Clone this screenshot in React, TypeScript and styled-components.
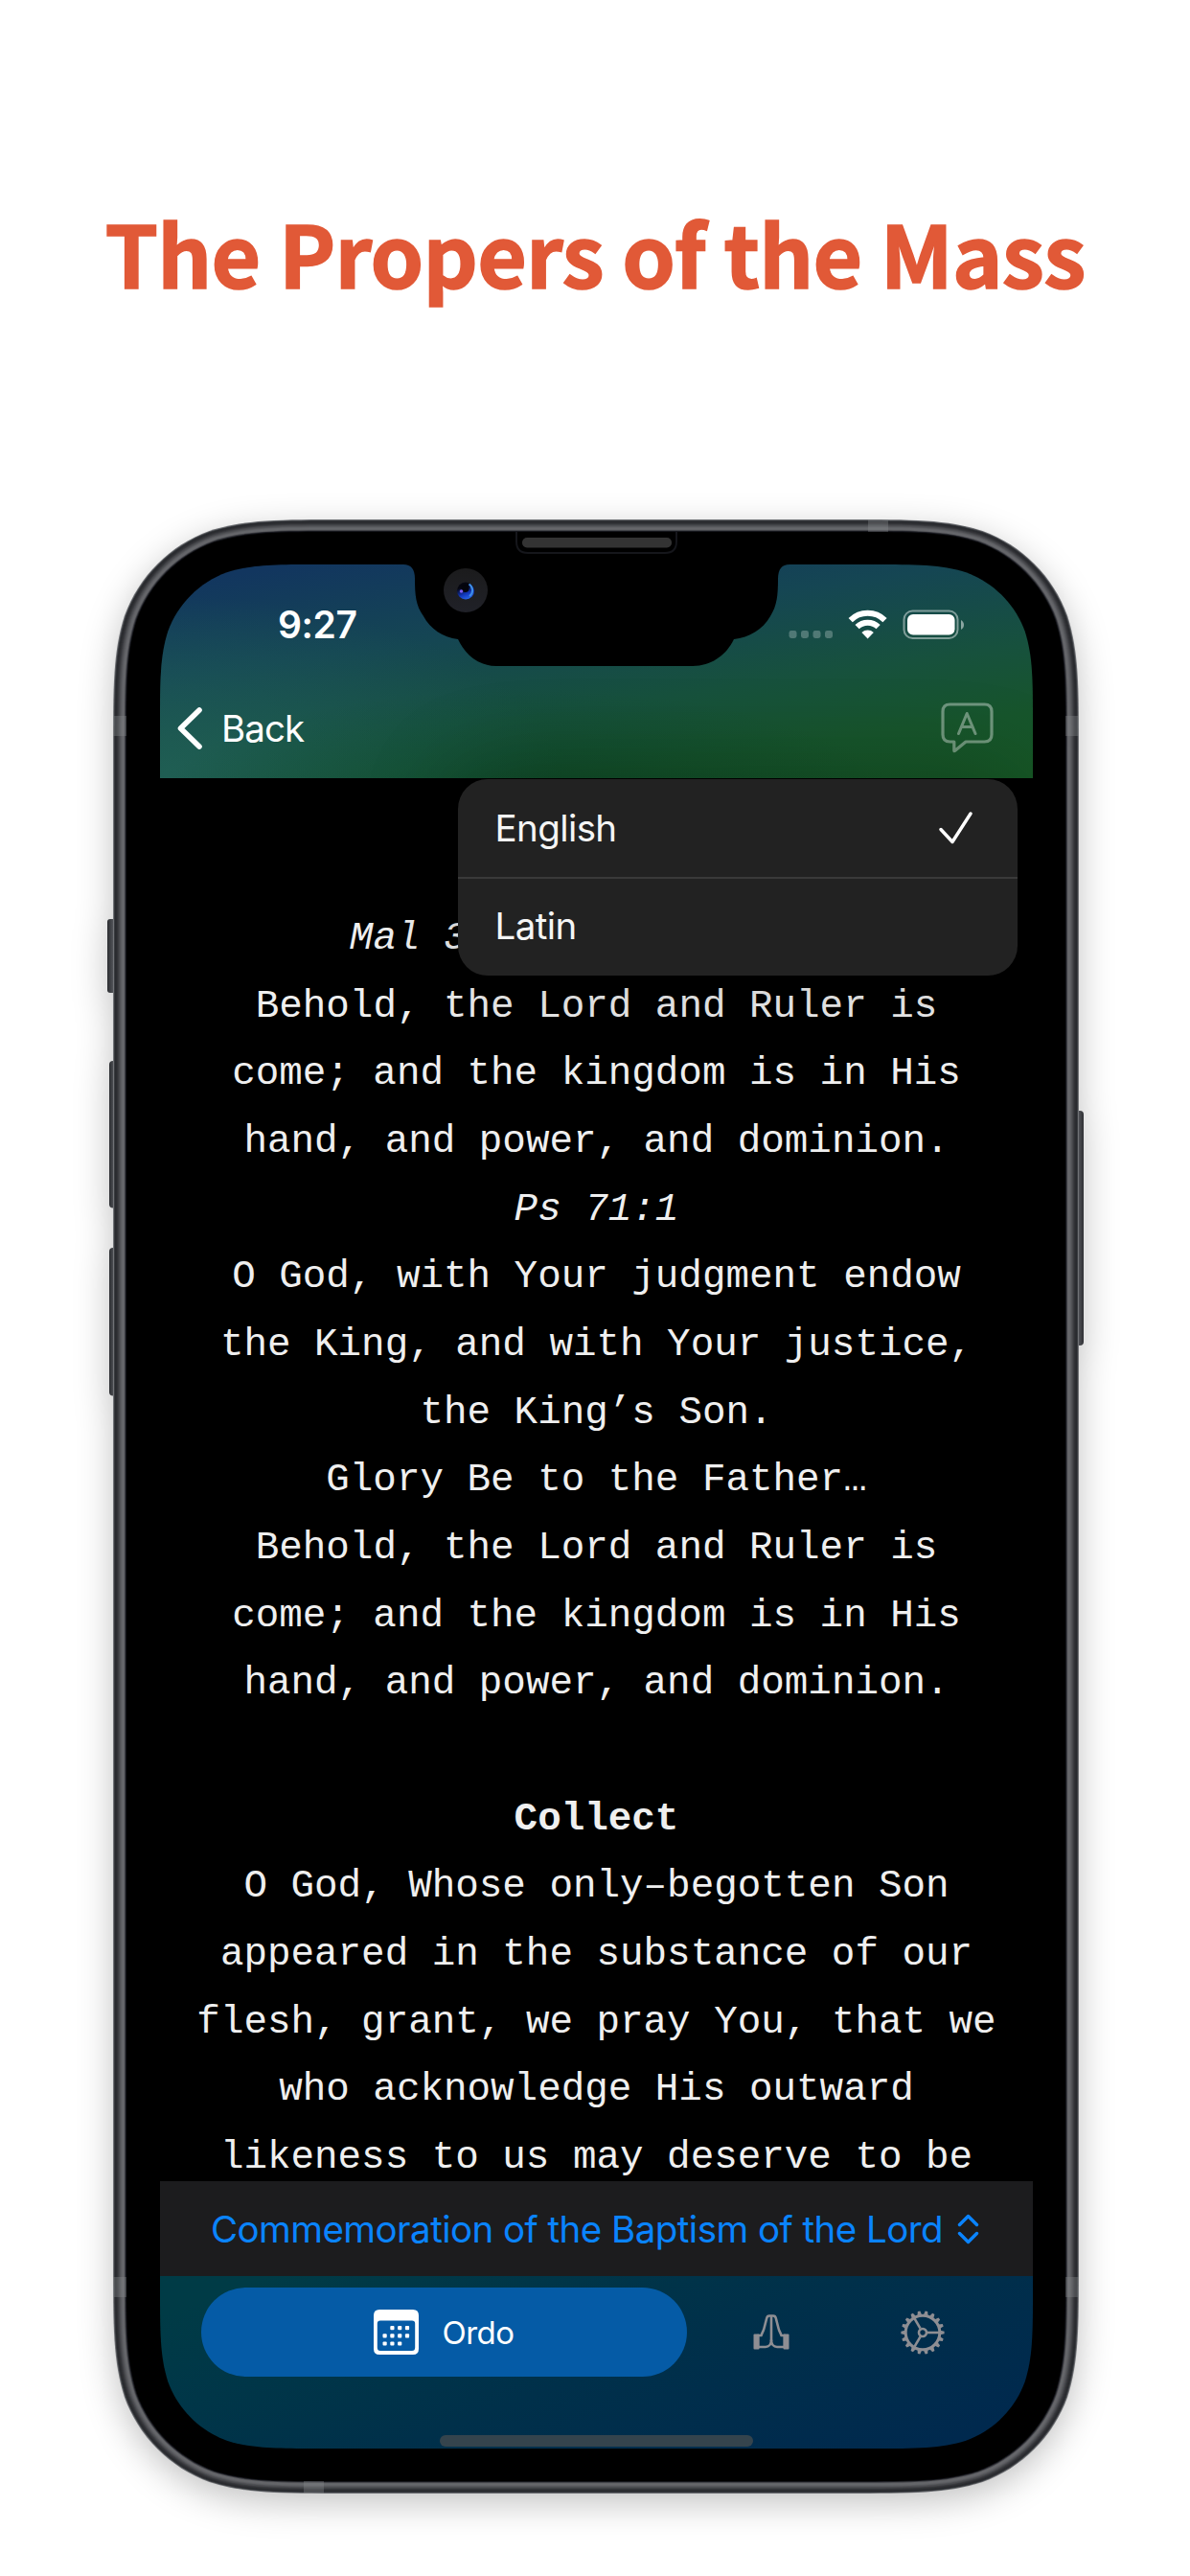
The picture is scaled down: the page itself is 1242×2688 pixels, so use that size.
import React from "react";
import styled, { createGlobalStyle } from "styled-components";

const GlobalStyle = createGlobalStyle`
  * { box-sizing: border-box; }
  html, body { margin: 0; padding: 0; background: #fff; }
  body { width: 1242px; height: 2688px; overflow: hidden; }
`;

const sans = `Inter, "Liberation Sans", sans-serif`;
const mono = `"Liberation Mono", monospace`;

/* Rounded rectangle with continuous-curvature corners. */
function squircle(x: number, y: number, w: number, h: number, r: number) {
  const R = x + w;
  const B = y + h;
  const a = 1.52866 * r, b = 1.08849 * r, c = 0.86841 * r, d = 0.63149 * r;
  const e = 0.07491 * r, f = 0.37282 * r, g = 0.16906 * r;
  return [
    `M${x + a} ${y}H${R - a}`,
    `C${R - b} ${y} ${R - c} ${y} ${R - d} ${y + e}`,
    `C${R - f} ${y + g} ${R - g} ${y + f} ${R - e} ${y + d}`,
    `C${R} ${y + c} ${R} ${y + b} ${R} ${y + a}V${B - a}`,
    `C${R} ${B - b} ${R} ${B - c} ${R - e} ${B - d}`,
    `C${R - g} ${B - f} ${R - f} ${B - g} ${R - d} ${B - e}`,
    `C${R - c} ${B} ${R - b} ${B} ${R - a} ${B}H${x + a}`,
    `C${x + b} ${B} ${x + c} ${B} ${x + d} ${B - e}`,
    `C${x + f} ${B - g} ${x + g} ${B - f} ${x + e} ${B - d}`,
    `C${x} ${B - c} ${x} ${B - b} ${x} ${B - a}V${y + a}`,
    `C${x} ${y + b} ${x} ${y + c} ${x + e} ${y + d}`,
    `C${x + g} ${y + f} ${x + f} ${y + g} ${x + d} ${y + e}`,
    `C${x + c} ${y} ${x + b} ${y} ${x + a} ${y}Z`,
  ].join("");
}

const Page = styled.main`
  width: 1242px;
  height: 2688px;
  display: flex;
  flex-direction: column;
  align-items: center;
  background: #fff;
`;

const Headline = styled.h1`
  margin: 0;
  height: 542px;
  padding-top: 197px;
  font: 700 89px/132px "Noto Sans CJK SC", "Noto Sans", sans-serif;
  letter-spacing: -0.75px;
  color: #e15937;
  -webkit-text-stroke: 1.6px #e15937;
  white-space: nowrap;
`;

const Device = styled.section`
  position: relative;
  width: 1008px;
  height: 2060px;
  padding: 47px 48px 47px 49px;
  margin-left: 2px;
`;

const BodyArt = styled.svg`
  position: absolute;
  left: -10px;
  top: 0;
  overflow: visible;
  filter: drop-shadow(0 10px 18px rgba(0, 0, 0, 0.24));
`;

const Screen = styled.div`
  position: relative;
  width: 911px;
  height: 1966px;
  display: flex;
  flex-direction: column;
  background: #000;
  overflow: hidden;
  clip-path: path("${squircle(0, 0, 911, 1966, 110.5)}");
`;

const Header = styled.header`
  height: 223px;
  flex: none;
  display: flex;
  flex-direction: column;
  background:
    radial-gradient(ellipse 380px 110px at 42% 108%, rgba(8, 66, 36, 0.5), transparent),
    radial-gradient(ellipse 420px 190px at 0% 100%, rgba(34, 98, 92, 0.75), transparent),
    linear-gradient(172deg, #12365f 6%, #154653 34%, #17513d 60%, #17552c 80%, #165625 100%);
`;

const StatusBar = styled.div`
  height: 110px;
  display: flex;
  align-items: center;
  justify-content: space-between;
  padding: 15px 72px 0 123px;
`;

const Clock = styled.time`
  font: 600 39px/48px ${sans};
  letter-spacing: -0.4px;
  color: #fff;
`;

const StatusIcons = styled.div`
  display: flex;
  align-items: center;
`;

const NavBar = styled.nav`
  flex: 1;
  display: flex;
  align-items: center;
  justify-content: space-between;
  padding: 9px 41px 0 18px;
`;

const BackButton = styled.button`
  display: flex;
  align-items: center;
  gap: 18px;
  padding: 0;
  border: 0;
  background: none;
  color: #fff;
  font: 400 38.5px/48px ${sans};
  letter-spacing: -0.9px;
`;

const Reader = styled.article`
  height: 1464px;
  flex: none;
  overflow: hidden;
  padding-top: 132px;
  background: #000;
`;

const Line = styled.p<{ $kind?: "cite" | "title"; $tail?: number }>`
  margin: 0;
  height: 70.66px;
  padding-right: ${(p) => (p.$tail ?? 0)}ch;
  font-family: ${mono};
  font-size: 40.9px;
  line-height: 70.66px;
  font-style: ${(p) => (p.$kind === "cite" ? "italic" : "normal")};
  font-weight: ${(p) => (p.$kind === "title" ? 700 : 400)};
  text-align: center;
  white-space: pre;
  color: #efefef;
`;

const Menu = styled.div`
  position: absolute;
  left: 311px;
  top: 224px;
  width: 584px;
  height: 205px;
  border-radius: 31px;
  overflow: hidden;
  background: #222;
  box-shadow: 0 0 100px rgba(0, 0, 0, 0.25);
`;

const MenuItem = styled.button`
  width: 100%;
  height: 102px;
  display: flex;
  align-items: center;
  justify-content: space-between;
  padding: 0 46px 0 38.5px;
  border: 0;
  background: none;
  color: #f5f5f5;
  font: 400 38.5px/48px ${sans};
  letter-spacing: -0.6px;

  & + & {
    height: 103px;
    padding-bottom: 3px;
    border-top: 2px solid #3a3a3a;
  }
`;

const Picker = styled.button`
  height: 99px;
  flex: none;
  display: flex;
  align-items: center;
  justify-content: center;
  gap: 15px;
  padding: 0 3px 0 0;
  border: 0;
  background: #1c1c1e;
  color: #0a84ff;
  font: 400 38.5px/48px ${sans};
  letter-spacing: -0.54px;
  white-space: nowrap;
`;

const TabBar = styled.footer`
  flex: 1;
  display: flex;
  flex-direction: column;
  justify-content: space-between;
  align-items: center;
  padding: 12px 0 2px;
  background: linear-gradient(160deg, #003b46 8%, #00304a 52%, #00294e 92%);
`;

const Tabs = styled.div`
  width: 100%;
  height: 93px;
  display: flex;
  align-items: center;
  padding-left: 43px;
`;

const ActiveTab = styled.button`
  width: 507px;
  height: 93px;
  display: flex;
  align-items: center;
  justify-content: center;
  gap: 24px;
  padding: 0;
  border: 0;
  border-radius: 47px;
  background: #055ba6;
  color: #fff;
  font: 400 33px/40px ${sans};
  letter-spacing: -0.5px;
`;

const TabIcon = styled.button<{ $gap: number }>`
  display: flex;
  margin-left: ${(p) => p.$gap}px;
  padding: 0;
  border: 0;
  background: none;
  color: #8e8e93;
`;

const HomeIndicator = styled.div`
  width: 327px;
  height: 12px;
  border-radius: 6px;
  background: #35444d;
`;

const NotchArt = styled.svg`
  position: absolute;
  left: 0;
  top: -34px;
`;

const frameTones = [
  "#707276", "#3a3c40", "#292b2f", "#2c2d31", "#323337", "#3b3c40", "#47484c",
  "#515256", "#5b5c60", "#636468", "#67686c", "#626367", "#3d3e43", "#15161c",
];

function DeviceBody() {
  return (
    <BodyArt width="1028" height="2060" viewBox="-10 0 1028 2060" aria-hidden>
      <defs>
        <clipPath id="rim">
          <path d={squircle(0, 0, 1008, 2060, 159)} />
        </clipPath>
        <linearGradient id="key" x1="0" x2="1" y1="0" y2="0">
          <stop offset="0" stopColor="#2b2d31" />
          <stop offset="0.5" stopColor="#515358" />
          <stop offset="1" stopColor="#2f3034" />
        </linearGradient>
      </defs>
      <rect x="-6" y="417" width="12" height="77" rx="3" fill="url(#key)" />
      <rect x="-4" y="565" width="10" height="153.500" rx="4" fill="url(#key)" />
      <rect x="-4" y="760" width="10" height="154.500" rx="4" fill="url(#key)" />
      <rect x="1002" y="617" width="11" height="245" rx="4" fill="url(#key)" />
      {frameTones.map((tone, i) => (
        <path key={i} d={squircle(i, i * 0.93, 1008 - 2 * i, 2060 - i * 1.86, 159 - i)} fill={tone} />
      ))}
      <g clipPath="url(#rim)" fill="#8a8b8f" opacity="0.35">
        <rect x="0" y="205" width="14" height="21" />
        <rect x="994" y="205" width="14" height="21" />
        <rect x="788" y="0" width="21" height="14" />
        <rect x="0" y="1834" width="14" height="21" />
        <rect x="994" y="1834" width="14" height="21" />
        <rect x="199" y="2046" width="21" height="14" />
      </g>
      <path d={squircle(14, 13, 980, 2034, 145)} fill="#000" />
      <path d="M421 13V23Q421 35 433 35H576Q588 35 588 23V13" fill="none" stroke="#15161b" strokeWidth="2" />
      <rect x="427" y="19" width="156" height="10.5" rx="5" fill="#333" />
    </BodyArt>
  );
}

function Notch() {
  return (
    <NotchArt width="911" height="160" viewBox="0 -34 911 160" aria-hidden>
      <defs>
        <linearGradient id="lens" x1="0.3" y1="0" x2="0.7" y2="1">
          <stop offset="0.25" stopColor="#05060f" />
          <stop offset="0.65" stopColor="#1136b8" />
          <stop offset="1" stopColor="#2c6cf0" />
        </linearGradient>
        <linearGradient id="ring" x1="0" y1="0" x2="0" y2="1">
          <stop offset="0" stopColor="#1b1b1c" />
          <stop offset="1" stopColor="#202128" />
        </linearGradient>
      </defs>
      <path
        d="M254 0C262 0 266 5 266 15C266 32 267 43 275 54C282 67 295 76 311 78C317 91 330 106 351 106H556C577 106 592 93 599 78C615 76 629 68 637 54C644 43 645 32 645 15C645 5 649 0 657 0V-2H254Z"
        fill="#000"
      />
      <circle cx="319" cy="27" r="23" fill="url(#ring)" />
      <circle cx="319" cy="27.500" r="9" fill="url(#lens)" />
      <circle cx="318.500" cy="25" r="4" fill="#04050c" />
      <path d="M322.500 20.500A7.500 7.500 0 0 1 323 33" fill="none" stroke="#3f8fe8" strokeWidth="2" />
      <circle cx="314.5" cy="28" r="1.8" fill="#7a5cf0" />
    </NotchArt>
  );
}

function StatusGlyphs() {
  return (
    <svg width="185" height="34" viewBox="819 635 185 34" fill="#fff" aria-hidden>
      {[821.5, 834, 846.5, 859].map((x) => (
        <rect key={x} x={x} y="658" width="8" height="8" rx="2.4" opacity="0.25" />
      ))}
      <g fill="none" stroke="#fff" strokeWidth="6">
        <path d="M885.7 647.2A25.5 25.5 0 0 1 921.5 647.2" />
        <path d="M892.6 654.2A15.6 15.6 0 0 1 914.6 654.2" />
      </g>
      <path d="M903.6 666.5L897.4 660A9.2 9.2 0 0 1 909.8 660Z" />
      <rect x="941.5" y="637.5" width="56" height="28.5" rx="9" fill="none" stroke="#fff" strokeWidth="2" opacity="0.45" />
      <rect x="945" y="641" width="49.5" height="21.5" rx="6" />
      <path d="M1001 647C1005 649 1005 655 1001 657Z" opacity="0.5" />
    </svg>
  );
}

function TranslateBubble() {
  return (
    <svg width="55" height="54" viewBox="0 0 55 54" fill="none" stroke="#fff" strokeLinecap="round" strokeLinejoin="round" opacity="0.38" aria-hidden>
      <path strokeWidth="3.2" d="M9.500 2H45.500Q53 2 53 9.500V33.500Q53 41 45.500 41H26L14.500 50.500Q13.800 51 13.800 50V41H9.500Q2 41 2 33.500V9.500Q2 2 9.500 2Z" />
      <path strokeWidth="3" d="M18.500 32.500L27.200 11.500L36 32.500M21.500 25.500H33" />
    </svg>
  );
}

function CalendarIcon() {
  const dots = [[1, 0], [2, 0], [3, 0], [0, 1], [1, 1], [2, 1], [3, 1], [0, 2], [1, 2], [2, 2]];
  return (
    <svg width="47" height="47" viewBox="0 0 47 47" aria-hidden>
      <path
        fillRule="evenodd"
        fill="#fff"
        d="M6 0H41Q47 0 47 6V41Q47 47 41 47H6Q0 47 0 41V6Q0 0 6 0ZM7 11.500Q3.800 11.500 3.800 14.500V39.500Q3.800 43 7 43H40Q43.200 43 43.200 39.500V14.500Q43.200 11.500 40 11.500Z"
      />
      {dots.map(([c, r]) => (
        <rect key={`${c}${r}`} x={9.5 + c * 7.8} y={17 + r * 8.2} width="4.200" height="4.200" rx="1" fill="#fff" />
      ))}
    </svg>
  );
}

function PrayingHands() {
  return (
    <svg width="38" height="37" viewBox="0 0 38 37" fill="none" stroke="currentColor" strokeWidth="2.600" strokeLinejoin="round" aria-hidden>
      <path d="M19 1.500V28" />
      <path d="M19 1.500H17Q14.800 1.500 14.200 4L11.500 14.500C10.800 17.500 9.500 19 8.500 22H5V34H13C16.500 34 19 31 19 27C19 31 21.500 34 25 34H33V22H29.500C28.500 19 27.200 17.500 26.500 14.500L23.800 4Q23.200 1.500 21 1.500Z" />
      <rect x="0.500" y="20.500" width="6" height="16" rx="1" fill="currentColor" stroke="none" />
      <rect x="31.500" y="20.500" width="6" height="16" rx="1" fill="currentColor" stroke="none" />
    </svg>
  );
}

function GearIcon() {
  const teeth = Array.from({ length: 18 }, (_, i) => i * 20 + 10);
  return (
    <svg width="46" height="46" viewBox="-23 -23 46 46" fill="none" stroke="currentColor" aria-hidden>
      <circle r="17.800" strokeWidth="3" />
      {teeth.map((t) => (
        <path key={t} d="M-2.300 -18.500L-1.300 -22.600H1.300L2.300 -18.500Z" fill="currentColor" stroke="none" transform={`rotate(${t})`} />
      ))}
      <circle r="4" strokeWidth="2.600" />
      {[90, 210, 330].map((t) => (
        <path key={t} d="M0 -5V-17" strokeWidth="2.600" transform={`rotate(${t})`} />
      ))}
    </svg>
  );
}

/* tail: width, in characters, of the part of a citation that the open menu hides */
const lines: { text: string; kind?: "cite" | "title"; tail?: number }[] = [
  { text: "Mal 3", kind: "cite", tail: 16 },
  { text: "Behold, the Lord and Ruler is" },
  { text: "come; and the kingdom is in His" },
  { text: "hand, and power, and dominion." },
  { text: "Ps 71:1", kind: "cite" },
  { text: "O God, with Your judgment endow" },
  { text: "the King, and with Your justice," },
  { text: "the King’s Son." },
  { text: "Glory Be to the Father…" },
  { text: "Behold, the Lord and Ruler is" },
  { text: "come; and the kingdom is in His" },
  { text: "hand, and power, and dominion." },
  { text: "" },
  { text: "Collect", kind: "title" },
  { text: "O God, Whose only–begotten Son" },
  { text: "appeared in the substance of our" },
  { text: "flesh, grant, we pray You, that we" },
  { text: "who acknowledge His outward" },
  { text: "likeness to us may deserve to be" },
];

export default function App() {
  return (
    <>
      <GlobalStyle />
      <Page>
        <Headline>The Propers of the Mass</Headline>
        <Device>
          <DeviceBody />
          <Screen>
            <Header>
              <StatusBar>
                <Clock>9:27</Clock>
                <StatusIcons>
                  <StatusGlyphs />
                </StatusIcons>
              </StatusBar>
              <NavBar>
                <BackButton>
                  <svg width="28" height="46" viewBox="0 0 28 46" fill="none" stroke="#fff" strokeWidth="5.600" strokeLinecap="round" strokeLinejoin="round" aria-hidden>
                    <path d="M23 4L3.500 23L23 42" />
                  </svg>
                  Back
                </BackButton>
                <TranslateBubble />
              </NavBar>
            </Header>
            <Reader>
              {lines.map((l, i) => (
                <Line key={i} $kind={l.kind} $tail={l.tail}>{l.text}</Line>
              ))}
            </Reader>
            <Picker>
              Commemoration of the Baptism of the Lord
              <svg width="23" height="32" viewBox="0 0 23 32" fill="none" stroke="currentColor" strokeWidth="3.400" strokeLinecap="round" strokeLinejoin="round" aria-hidden>
                <path d="M2.500 11.500L11.500 2.500L20.500 11.500M2.500 20.500L11.500 29.500L20.500 20.500" />
              </svg>
            </Picker>
            <TabBar>
              <Tabs>
                <ActiveTab>
                  <CalendarIcon />
                  Ordo
                </ActiveTab>
                <TabIcon $gap={69}>
                  <PrayingHands />
                </TabIcon>
                <TabIcon $gap={116}>
                  <GearIcon />
                </TabIcon>
              </Tabs>
              <HomeIndicator />
            </TabBar>
            <Menu>
              <MenuItem>
                English
                <svg width="36" height="34" viewBox="0 0 36 34" fill="none" stroke="#fff" strokeWidth="3.400" strokeLinecap="round" strokeLinejoin="round" aria-hidden>
                  <path d="M2 18.500L14 31.500L33 2" />
                </svg>
              </MenuItem>
              <MenuItem>Latin</MenuItem>
            </Menu>
            <Notch />
          </Screen>
        </Device>
      </Page>
    </>
  );
}
